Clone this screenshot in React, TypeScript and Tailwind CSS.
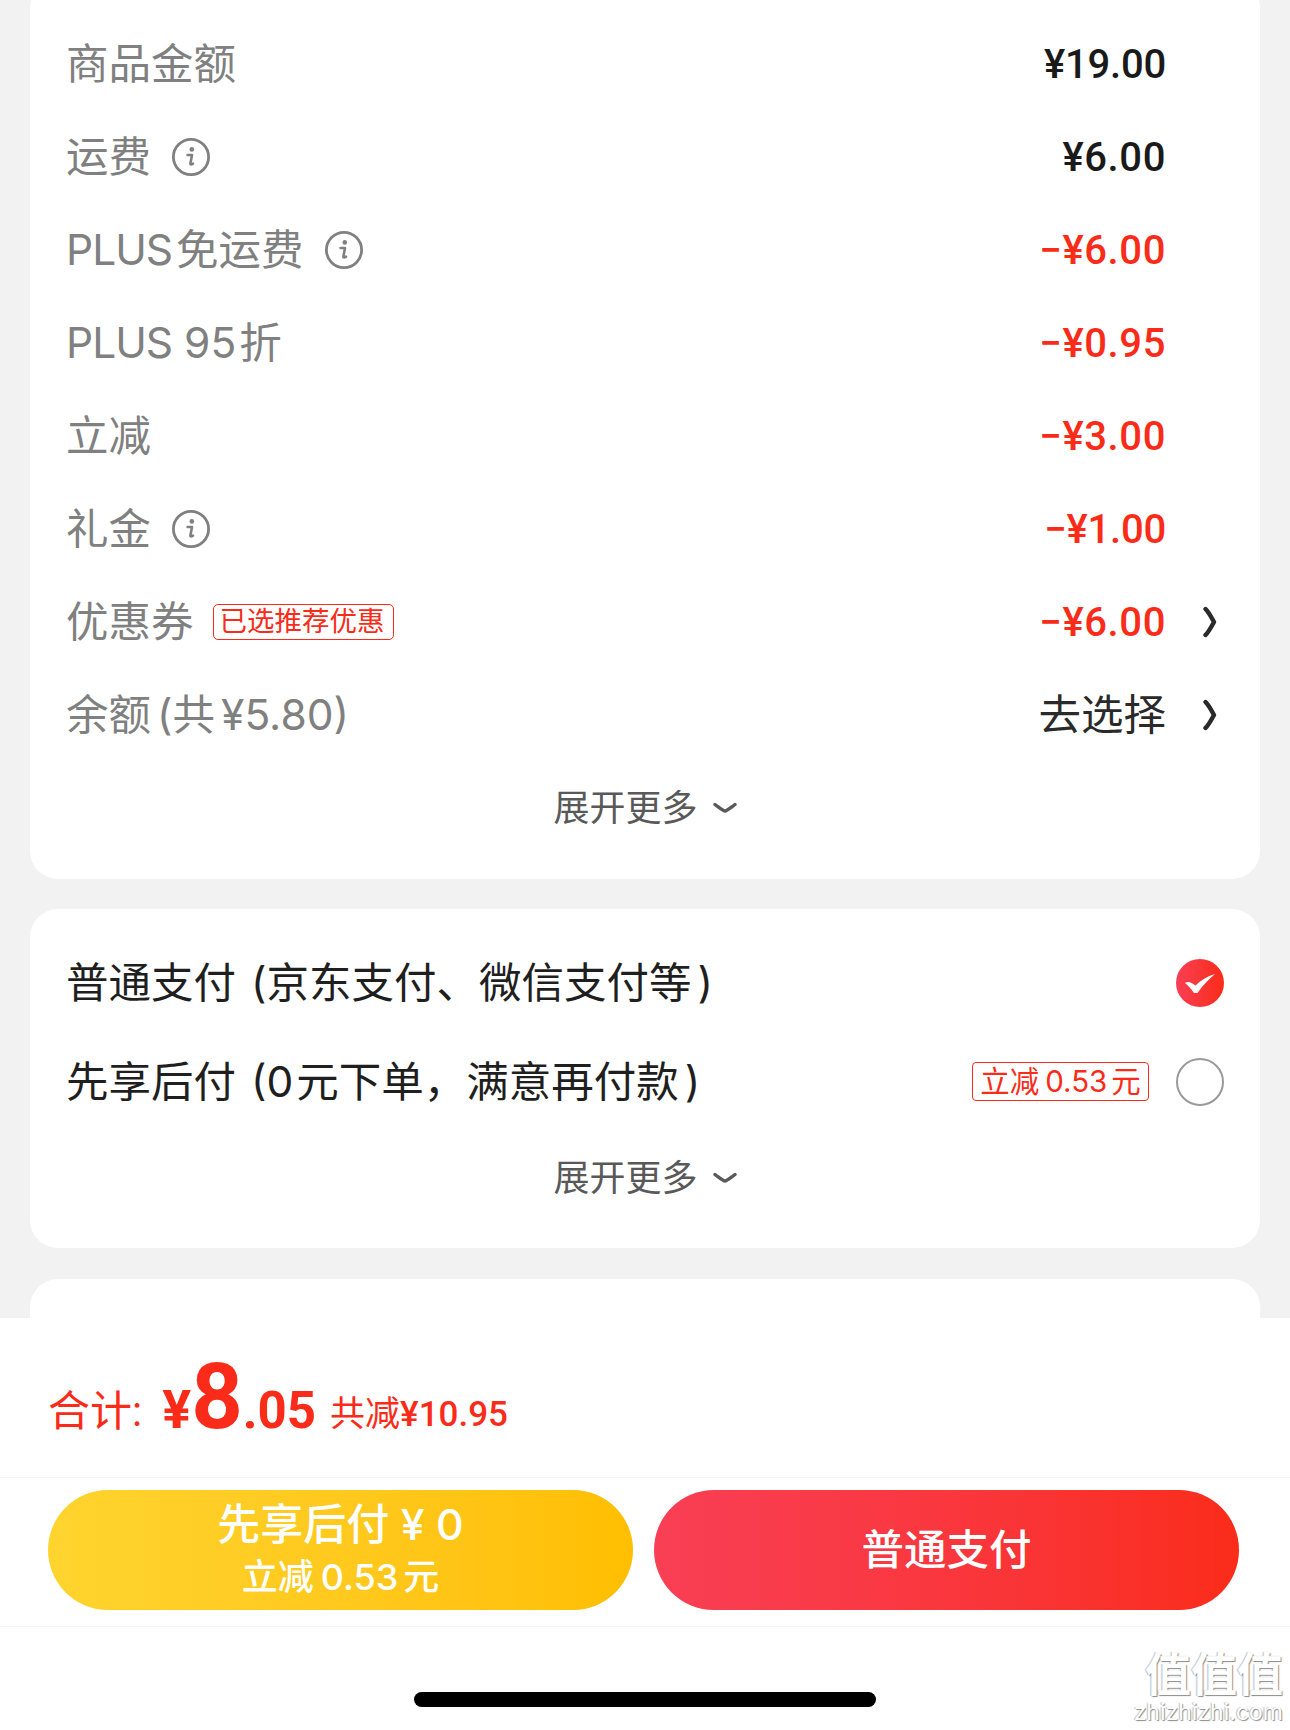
import React from 'react';

const CJK = '"Noto Sans CJK SC"';

const InfoIcon = () => (
  <svg className="ml-[21px] shrink-0" width="38" height="38" viewBox="0 0 38 38" fill="none">
    <circle cx="19" cy="19" r="17.6" stroke="#808080" strokeWidth="2.8" />
    <circle cx="19.8" cy="11.4" r="2.3" fill="#808080" />
    <path d="M15.6 17h4.4l-1.6 8.4c-.2 1 .7 1.4 2.6.2" stroke="#808080" strokeWidth="2.6" strokeLinecap="round" strokeLinejoin="round" />
  </svg>
);

const Chevron = () => (
  <svg width="14" height="32" viewBox="0 0 14 32" fill="none">
    <path d="M2.5 3 Q5 5 11 16 Q5 27 2.5 29" stroke="#2a2a2a" strokeWidth="4.4" strokeLinecap="round" strokeLinejoin="round" />
  </svg>
);

const Expand = () => (
  <div className="flex h-[93px] items-center justify-center pt-[1px] text-[36px] text-[#595959]">
    <span>展开更多</span>
    <svg className="ml-[15px]" width="24" height="14" viewBox="0 0 24 14" fill="none">
      <path d="M2 3.5 C8 8 10 10 12 10 C14 10 16 8 22 3.5" stroke="#595959" strokeWidth="3.4" strokeLinecap="round" />
    </svg>
  </div>
);

const Row = ({ label, info, tag, value, red, chevron, plain, tight }: {
  label: React.ReactNode; info?: boolean; tag?: string; value: string; red?: boolean; chevron?: boolean; plain?: boolean; tight?: boolean;
}) => (
  <div className="flex h-[93px] items-center pl-[36px] pr-[43px]">
    <span className="text-[42.5px] text-[#808080]">{label}</span>
    {info && <InfoIcon />}
    {tag && (
      <span className="ml-[19px] flex h-[36px] w-[181px] items-center justify-center rounded-[5px] border border-[#fa2c19] pr-[2px] text-[27.5px] leading-none text-[#fa2c19]">
        {tag}
      </span>
    )}
    {plain ? (
      <span className="ml-auto text-[42.5px] text-[#2a2a2a]">{value}</span>
    ) : (
      <span
        className={`ml-auto pt-[2px] text-[40px] font-medium ${tight ? 'tracking-[-0.2px]' : 'tracking-[0.6px]'} ${red ? 'text-[#fa2c19]' : 'text-[#1a1a1a]'}`}
        style={{ fontFamily: `Roboto, ${CJK}, sans-serif` }}
      >
        {value}
      </span>
    )}
    <span className="ml-[37px] flex w-[14px] justify-center">{chevron && <Chevron />}</span>
  </div>
);

export default function App() {
  return (
    <div
      className="flex h-[1730px] w-[1290px] flex-col overflow-hidden bg-[#f2f2f2]"
      style={{ fontFamily: `Inter, ${CJK}, sans-serif` }}
    >
      <div className="flex h-[1318px] flex-col overflow-hidden px-[30px]">
        <div className="-mt-[20px] shrink-0 rounded-[28px] bg-white pb-[25px] pt-[37px]">
          <Row label="商品金额" value="¥19.00" tight />
          <Row label="运费" info value="¥6.00" />
          <Row
            label={<><span className="mr-[4px] tracking-[-1px]">PLUS</span>免运费</>}
            info
            value="−¥6.00"
            red
          />
          <Row
            label={<><span className="tracking-[-1px]">PLUS</span> 95<span className="ml-[3px]">折</span></>}
            value="−¥0.95"
            red
          />
          <Row label="立减" value="−¥3.00" red />
          <Row label="礼金" info value="−¥1.00" red tight />
          <Row label="优惠券" tag="已选推荐优惠" value="−¥6.00" red chevron />
          <Row
            label={<>余额<span className="ml-[6px]">(共</span><span className="ml-[6px]">¥5.80)</span></>}
            value="去选择"
            plain
            chevron
          />
          <Expand />
        </div>

        <div className="mt-[30px] shrink-0 rounded-[28px] bg-white pb-[24px] pt-[24px]">
          <div className="flex h-[99px] items-center pl-[36px] pr-[36px]">
            <span className="text-[42.5px] text-[#1f1f1f]">
              普通支付<span className="ml-[15px]">(</span>京东支付、微信支付等<span className="ml-[6px]">)</span>
            </span>
            <svg className="ml-auto" width="48" height="48" viewBox="0 0 48 48" fill="none">
              <defs>
                <linearGradient id="chk" x1="0" y1="0" x2="1" y2="0">
                  <stop offset="0" stopColor="#f93f55" />
                  <stop offset="1" stopColor="#fa2c19" />
                </linearGradient>
              </defs>
              <circle cx="24" cy="24" r="24" fill="url(#chk)" />
              <path d="M9 24 C12 22 15 23 19.5 26.5 C25 21 31 17.5 39 15 C33 20 27 26 21.5 34 L18 34 C15.5 30 12.5 27 9 24 Z" fill="#fff" />
            </svg>
          </div>
          <div className="flex h-[99px] items-center pl-[36px] pr-[36px]">
            <span className="text-[42.5px] text-[#1f1f1f]">
              先享后付<span className="ml-[15px]">(</span>0<span className="ml-[3px]">元下单，满意再付款</span><span className="ml-[6px]">)</span>
            </span>
            <span className="ml-auto flex h-[39px] w-[177px] items-center justify-center rounded-[4px] border border-[#fa2c19] text-[29.5px] leading-none text-[#fa2c19]">
              立减<span className="ml-[6px]">0.53</span><span className="ml-[4px]">元</span>
            </span>
            <span className="ml-[27px] h-[48px] w-[48px] rounded-full border-2 border-[#9a9a9a]" />
          </div>
          <Expand />
        </div>

        <div className="mt-[31px] h-[80px] shrink-0 rounded-t-[28px] bg-white" />
      </div>

      <div className="relative flex flex-1 flex-col bg-white">
        <div
          className="flex h-[159px] items-baseline whitespace-nowrap pl-[48px] pt-[35px] text-[#fa2c19]"
          style={{ fontFamily: `Roboto, ${CJK}, sans-serif` }}
        >
          <span className="-translate-y-[2px] text-[42px]">合计:</span>
          <span className="ml-[20px] text-[54px] font-bold">¥</span>
          <span className="text-[90px] font-bold leading-none">8</span>
          <span className="text-[51px] font-bold">.05</span>
          <span className="ml-[14px] -translate-y-[2px] text-[35px]">共减</span>
          <span className="-translate-y-[2px] text-[35px] font-medium">¥10.95</span>
        </div>
        <div className="flex h-[150px] items-center gap-[21px] border-y border-[#f5f5f5] px-[48px] pb-[4px]">
          <div className="flex h-[120px] w-[585px] flex-col items-center justify-center rounded-full bg-gradient-to-r from-[#ffd42e] to-[#ffbe00] font-medium text-white">
            <span className="text-[43px] leading-[50px]">先享后付 ¥ 0</span>
            <span className="mt-[3px] text-[36px] leading-[50px]">立减<span className="ml-[7px]">0.53</span><span className="ml-[5px]">元</span></span>
          </div>
          <div className="flex h-[120px] w-[585px] items-center justify-center rounded-full bg-gradient-to-r from-[#f93f55] to-[#fa2c19] text-[42.5px] font-medium text-white">
            普通支付
          </div>
        </div>
        <div className="flex flex-1 justify-center pt-[65px]">
          <div className="h-[15px] w-[462px] rounded-full bg-black" />
        </div>
        <div className="absolute bottom-[5px] right-[7px] flex flex-col items-end text-white [text-shadow:1px_1px_1px_#8a8a8a,-1px_0_1px_#bcbcbc]">
          <span className="text-[46px] font-bold leading-[50px]">值值值</span>
          <span className="text-[23px] leading-[26px]">zhizhizhi.com</span>
        </div>
      </div>
    </div>
  );
}
